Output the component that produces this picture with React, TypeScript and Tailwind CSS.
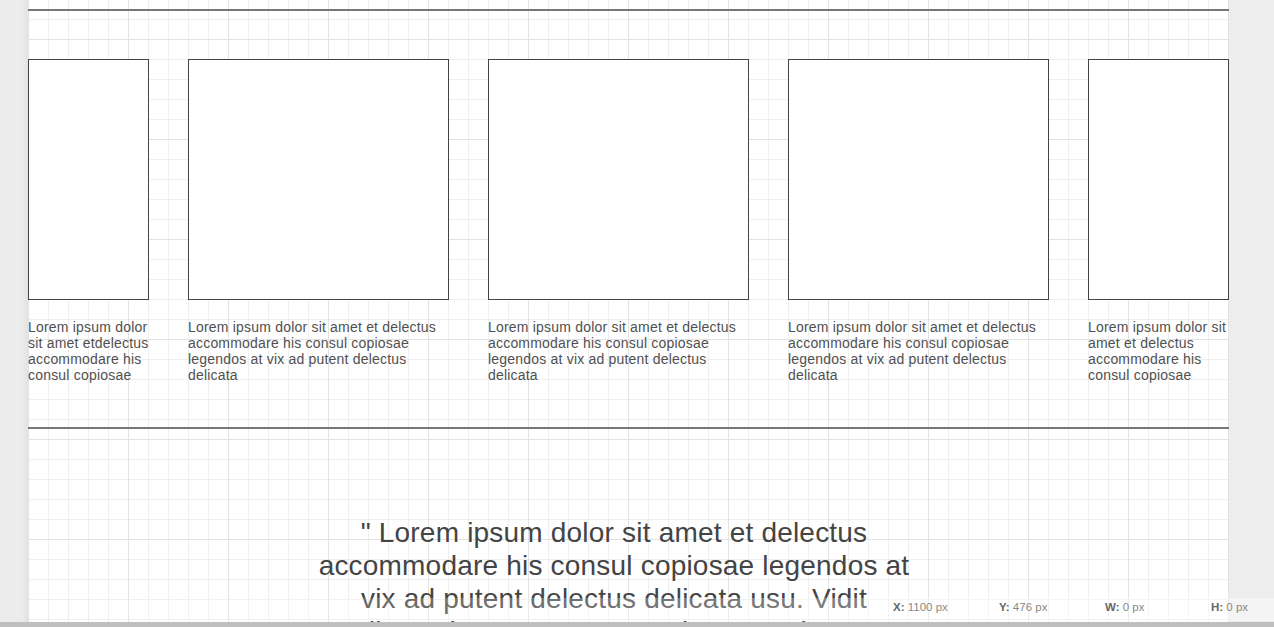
import React from 'react';

const cards = [
  { width: 'w-[121px]', text: 'Lorem ipsum dolor sit amet etdelectus accommodare his consul copiosae' },
  { width: 'w-[261px]', text: 'Lorem ipsum dolor sit amet et delectus accommodare his consul copiosae legendos at vix ad putent delectus delicata' },
  { width: 'w-[261px]', text: 'Lorem ipsum dolor sit amet et delectus accommodare his consul copiosae legendos at vix ad putent delectus delicata' },
  { width: 'w-[261px]', text: 'Lorem ipsum dolor sit amet et delectus accommodare his consul copiosae legendos at vix ad putent delectus delicata' },
  { width: 'w-[141px]', text: 'Lorem ipsum dolor sit amet et delectus accommodare his consul copiosae' },
];

const stats = [
  { label: 'X:', value: '1100 px' },
  { label: 'Y:', value: '476 px' },
  { label: 'W:', value: '0 px' },
  { label: 'H:', value: '0 px' },
];

// Canvas grid: minor lines every 20px, major every 100px
const gridBg =
  'bg-[linear-gradient(to_right,#e3e3e3_1px,transparent_1px),linear-gradient(to_bottom,#e3e3e3_1px,transparent_1px),linear-gradient(to_right,#efefef_1px,transparent_1px),linear-gradient(to_bottom,#efefef_1px,transparent_1px)] bg-[size:100px_100px,100px_100px,20px_20px,20px_20px] bg-[position:0_0,0_39px,0_0,0_19px]';

export default function App() {
  return (
    <div className="relative h-[627px] w-[1274px] overflow-hidden bg-[#ededed] font-['Liberation_Sans',Arial,sans-serif]">
      <div className="flex h-full">
        {/* left rail */}
        <div className="flex w-[28px] shrink-0">
          <div className="flex-1 bg-[#ececec]" />
          <div className="w-[6px] bg-gradient-to-r from-[#ececec] to-[#e2e2e2]" />
        </div>

        {/* canvas */}
        <div className={`w-[1201px] shrink-0 bg-white ${gridBg}`}>
          <div className="pt-[9px]">
            <div className="h-[2px] bg-[#777777]" />
          </div>

          <div className="mt-[48px] flex gap-[39px]">
            {cards.map((card, i) => (
              <div key={i} className={`${card.width} shrink-0`}>
                <div className="h-[241px] border border-[#444444] bg-white" />
                <p className="mt-[19px] text-[14px] leading-[16px] tracking-[0.2px] text-[#505050]">
                  {card.text}
                </p>
              </div>
            ))}
          </div>

          <div className="mt-[44px] h-[2px] bg-[#777777]" />

          <div className="mt-[87px] pl-[285px]">
            <p className="w-[602px] text-center text-[28px] leading-[33px] tracking-[0.2px] text-[#444444]">
              " Lorem ipsum dolor sit amet et delectus accommodare his consul copiosae legendos at vix ad putent
              delectus delicata usu. Vidit dissentiet eos cu eum an brute copiosae
            </p>
          </div>
        </div>

        {/* right rail */}
        <div className="flex-1 bg-[#ededed]" />
      </div>

      {/* status bar */}
      <div className="absolute bottom-[6px] left-[60px] right-0 flex h-[23px] items-center bg-gradient-to-r from-white/0 via-white/15 via-[8%] to-white/40 pl-[833px] text-[11.5px]">
        {stats.map((s) => (
          <div key={s.label} className="-mt-[4px] w-[106px] shrink-0 whitespace-nowrap">
            <span className="font-bold text-[#666666]">{s.label}</span>{' '}
            <span className="text-[#888888]">{s.value}</span>
          </div>
        ))}
      </div>

      {/* bottom scrollbar */}
      <div className="absolute bottom-0 left-0 right-0 h-[5px] bg-[#bfbfbf]" />
    </div>
  );
}
